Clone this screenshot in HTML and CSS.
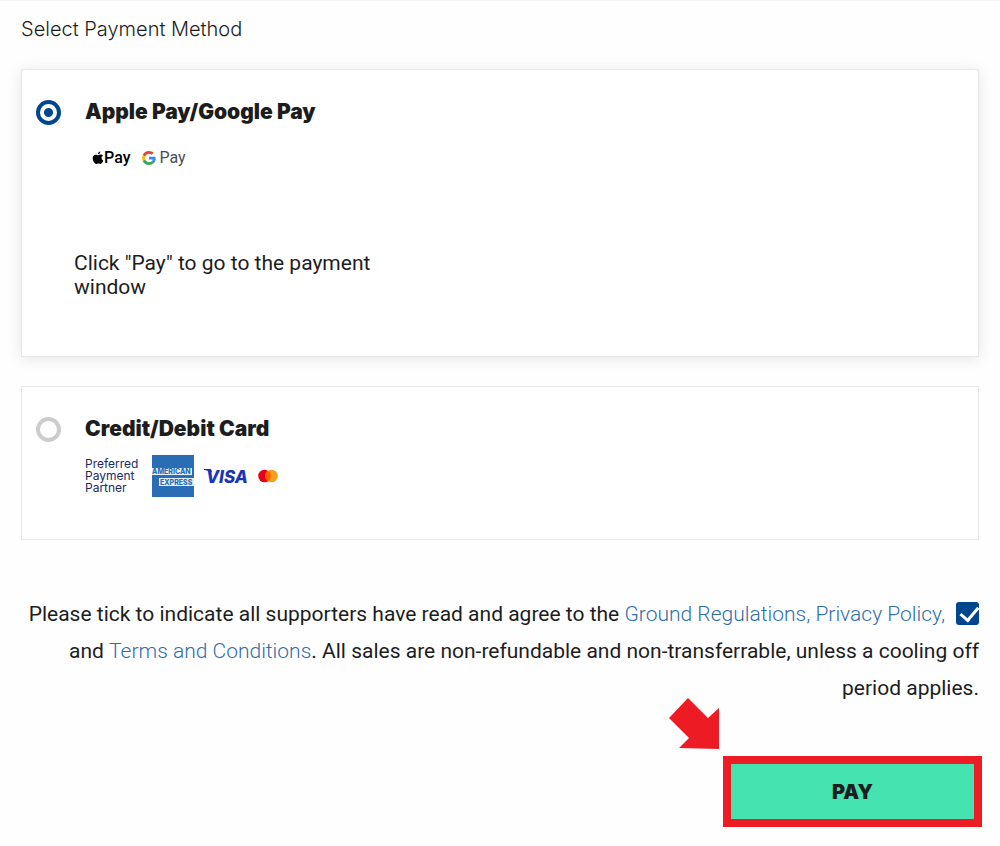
FILE: index.html
```html
<!DOCTYPE html>
<html lang="en">
<head>
    <meta charset="UTF-8">
    <meta name="viewport" content="width=device-width, initial-scale=1">
    <title>Select Payment Method</title>
    <link rel="stylesheet" href="styles.css">
</head>
<body>
<form class="checkout" action="#">
    <h1 class="heading">Select Payment Method</h1>

    <section class="method method-selected">
        <input type="radio" class="method-radio" id="method_wallet" name="method" value="wallet" checked>
        <div class="method-body">
            <label class="method-title" for="method_wallet">Apple Pay/Google Pay</label>
            <div class="wallets">
                <span class="wallet apple">
                    <svg width="12" height="14" viewBox="0 0 22 28" aria-hidden="true">
                        <path d="M15.6 1c.2 3-2.3 5.700-4.900 5.600C10.400 3.800 12.900 1.200 15.600 1zM20.800 9.600c-1.700 1-2.700 2.600-2.700 4.600 0 2.300 1.400 4.200 3.500 5-.9 2.900-3.200 6.800-5.500 6.800-1.600 0-2.200-1-4.200-1s-2.700 1-4.200 1C4.400 26.100.4 19.600.4 14.500c0-4.600 2.900-7.200 6-7.200 2 0 3.500 1.300 4.900 1.300 1.300 0 3-1.400 5.300-1.400 1.800 0 3.300.9 4.200 2.400z"/>
                    </svg>
                    <span>Pay</span>
                </span>
                <span class="wallet google">
                    <svg width="14" height="14" viewBox="0 0 48 48" aria-hidden="true">
                        <path fill="#ea4335" d="M24 9.500c3.540 0 6.710 1.220 9.210 3.600l6.850-6.850C35.900 2.380 30.470 0 24 0 14.620 0 6.510 5.380 2.560 13.220l7.980 6.190C12.430 13.720 17.740 9.500 24 9.500z"/>
                        <path fill="#4285f4" d="M46.980 24.550c0-1.570-.15-3.090-.38-4.550H24v9.020h12.940c-.58 2.960-2.260 5.480-4.780 7.180l7.730 6c4.510-4.180 7.090-10.360 7.090-17.650z"/>
                        <path fill="#fbbc05" d="M10.530 28.590c-.48-1.450-.76-2.990-.76-4.590s.27-3.140.76-4.590l-7.980-6.190C.92 16.460 0 20.120 0 24c0 3.880.92 7.540 2.560 10.780l7.970-6.190z"/>
                        <path fill="#34a853" d="M24 48c6.480 0 11.930-2.130 15.890-5.810l-7.730-6c-2.150 1.450-4.920 2.300-8.160 2.300-6.260 0-11.570-4.220-13.470-9.910l-7.980 6.190C6.510 42.620 14.620 48 24 48z"/>
                    </svg>
                    <span>Pay</span>
                </span>
            </div>
            <p class="hint">Click "Pay" to go to the payment window</p>
        </div>
    </section>

    <section class="method">
        <input type="radio" class="method-radio" id="method_card" name="method" value="card">
        <div class="method-body">
            <label class="method-title" for="method_card">Credit/Debit Card</label>
            <div class="cards">
                <span class="partner">Preferred<br>Payment<br>Partner</span>
                <svg class="amex" width="42" height="42" viewBox="0 0 42 42">
                    <path fill="#2a6db5" d="M0 0h42v42H0z"/>
                    <path fill="#e4f0f8" d="M0 13h40v7H0zM7 23h35v8H7z"/>
                    <text x="0" y="19">AMERICAN</text>
                    <text x="8" y="30">EXPRESS</text>
                </svg>
                <svg class="visa" width="48" height="20" viewBox="0 0 48 20">
                    <path d="M0 3h7l1 3-2 1Q4 4 0 4z"/>
                    <text x="2" y="17">VISA</text>
                </svg>
                <svg class="mastercard" width="20" height="14" viewBox="0 0 20 14" aria-hidden="true">
                    <circle cx="6.500" cy="7" r="6.300" fill="#eb001b"/>
                    <circle cx="13.500" cy="7" r="6.300" fill="#f79e1b"/>
                    <path fill="#ff5f00" d="M10 1.800a6.300 6.300 0 0 1 0 10.400 6.300 6.300 0 0 1 0-10.400z"/>
                </svg>
            </div>
        </div>
    </section>

    <div class="terms">
        <input type="checkbox" class="terms-check" id="agree" name="agree" checked>
        <label for="agree">Please tick to indicate all supporters have read and agree to the
        <a href="#">Ground Regulations,</a> <a href="#">Privacy Policy,</a> and
        <a href="#">Terms and Conditions</a>. All sales are non-refundable and non-transferrable, unless a cooling off period applies.</label>
    </div>

    <div class="actions">
        <svg class="pointer" width="50" height="51" viewBox="0 0 50 51" aria-hidden="true">
            <path d="M19 0l20 20 11-10v41l-40-1 10-10L0 20z"/>
        </svg>
        <button type="submit" class="pay">PAY</button>
    </div>
</form>
</body>
</html>
```

FILE: styles.css
```css
* {
    box-sizing: border-box;
}
body {
    margin: 0;
    background: #fefefe;
    color: #1d1d1d;
    font: 20px/24px Inter, "Liberation Sans", sans-serif;
}
a {
    color: #2f6ea8;
    font-weight: 300;
    text-decoration: none;
}
a:hover {
    text-decoration: underline;
}
.checkout {
    padding: 16px 21px;
    border-top: 1px solid #f6f6f6;
}
.heading {
    margin: 0 0 28px;
    font-size: 20px;
    font-weight: 300;
}

/* payment methods */
.method {
    display: flex;
    gap: 24px;
    min-height: 154px;
    margin-bottom: 29px;
    padding: 30px 14px;
    background: #fff;
    border: 1px solid #e8e8e8;
}
.method-selected {
    min-height: 288px;
    box-shadow: 0 2px 14px rgba(0, 0, 0, 0.1);
}
.method-radio {
    flex: none;
    appearance: none;
    width: 25px;
    height: 25px;
    margin: 0;
    border: 4px solid #ccc;
    border-radius: 50%;
    background: #fff;
}
.method-radio:checked {
    border-color: #00468f;
    background: radial-gradient(circle, #00468f 4px, #fff 5px);
}
.method-title {
    font-size: 21px;
    font-weight: 900;
}
.wallets {
    display: flex;
    gap: 12px;
    margin: 22px 0 0 7px;
    font-family: Roboto, Inter, sans-serif;
    font-size: 16px;
    line-height: 24px;
}
.wallet {
    display: flex;
    align-items: center;
}
.apple {
    color: #000;
    font-weight: 500;
}
.google {
    gap: 3px;
    color: #4a4e52;
}
.hint {
    width: 310px;
    margin: 81px 0 0 -11px;
    font-family: Roboto, Inter, sans-serif;
    font-size: 21px;
}
.cards {
    display: flex;
    align-items: center;
    margin-top: 14px;
}
.partner {
    width: 67px;
    color: #1c2a63;
    font-size: 12px;
    line-height: 12px;
}
.amex text {
    fill: #2a6db5;
    font-size: 7px;
    font-weight: 800;
}
.visa {
    margin-left: 10px;
    overflow: visible;
    fill: #1a34b8;
}
.visa text {
    font-size: 17px;
    font-style: italic;
    font-weight: 800;
}
.mastercard {
    margin-left: 6px;
}

/* agreement and submit */
.terms {
    margin-top: 56px;
    font-family: Roboto, Inter, sans-serif;
    font-size: 21px;
    line-height: 37px;
    text-align: right;
}
.terms-check {
    float: right;
    appearance: none;
    width: 23px;
    height: 23px;
    margin: 6px 0 0 11px;
    border-radius: 3px;
    background: #00468f;
}
.terms-check:checked::before {
    content: "";
    display: block;
    width: 8px;
    height: 15px;
    margin: 2px 0 0 8px;
    border: solid #fff;
    border-width: 0 3px 3px 0;
    transform: translateY(-1px) rotate(40deg);
}
.actions {
    display: flex;
    justify-content: flex-end;
    align-items: flex-start;
    gap: 4px;
    margin-right: -3px;
}
.pointer {
    margin-top: -9px;
    fill: #ed1c24;
}
.pay {
    width: 259px;
    height: 71px;
    margin-top: 49px;
    border: 8px solid #ed1c24;
    background: #45e3b0;
    color: #1d1d1d;
    font: inherit;
    font-weight: 900;
}
```
